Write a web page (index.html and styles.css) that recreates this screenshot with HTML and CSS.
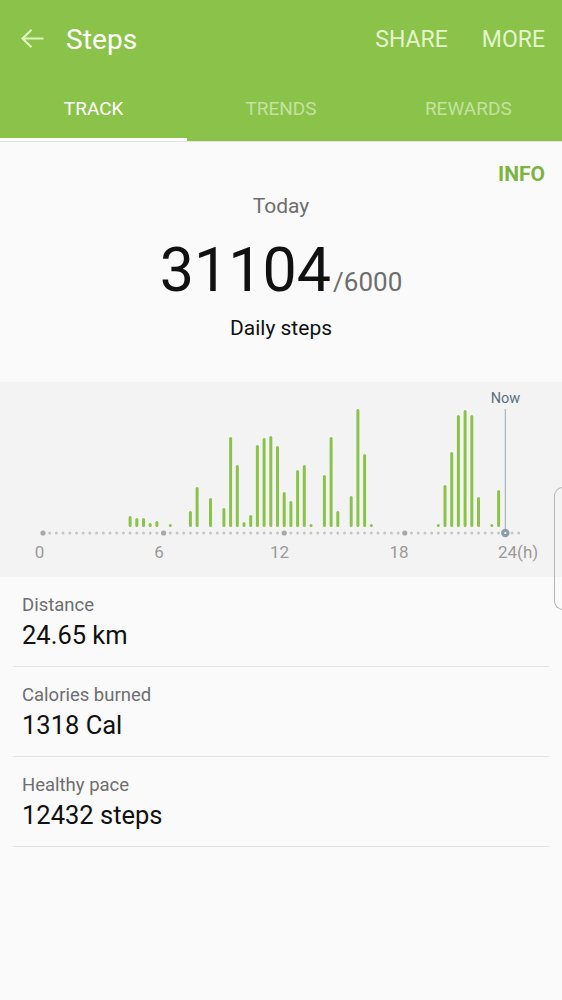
FILE: index.html
```html
<!DOCTYPE html>
<html lang="en">
<head>
<meta charset="utf-8">
<title>Steps</title>
<link rel="stylesheet" href="styles.css">
</head>
<body>
<div class="screen">
  <header class="header">
    <div class="appbar">
      <svg class="back" width="24" height="20" viewBox="0 0 24 20" aria-hidden="true">
        <path d="M1.5 9.5 H22.5 M10.5 0.8 L1.5 9.5 L10.5 18.2" fill="none" stroke="#dcf4bd" stroke-width="2.2" stroke-linecap="butt" stroke-linejoin="miter"/>
      </svg>
      <h1 class="title">Steps</h1>
      <div class="actions">
        <span class="action">SHARE</span>
        <span class="action">MORE</span>
      </div>
    </div>
    <nav class="tabs">
      <div class="tab active">TRACK</div>
      <div class="tab">TRENDS</div>
      <div class="tab">REWARDS</div>
    </nav>
  </header>

  <section class="summary">
    <div class="info-row"><span class="info">INFO</span></div>
    <div class="today">Today</div>
    <div class="count"><span class="count-value">31104</span><span class="count-goal">/6000</span></div>
    <div class="count-label">Daily steps</div>
  </section>

  <section class="chart">
    <svg class="chart-svg" width="562" height="195" viewBox="0 0 562 195">
      <g fill="#8bc34a">
        <rect x="128.6" y="134" width="3" height="11" rx="1.5"/>
        <rect x="135.3" y="136" width="3" height="9" rx="1.5"/>
        <rect x="142.0" y="136" width="3" height="9" rx="1.5"/>
        <rect x="148.7" y="141" width="3" height="4" rx="1.5"/>
        <rect x="155.4" y="139" width="3" height="6" rx="1.5"/>
        <rect x="168.8" y="142" width="3" height="3" rx="1.5"/>
        <rect x="188.9" y="129" width="3" height="16" rx="1.5"/>
        <rect x="195.6" y="105" width="3" height="40" rx="1.5"/>
        <rect x="209.0" y="116" width="3" height="29" rx="1.5"/>
        <rect x="222.4" y="126" width="3" height="19" rx="1.5"/>
        <rect x="229.1" y="55" width="3" height="90" rx="1.5"/>
        <rect x="235.8" y="83" width="3" height="62" rx="1.5"/>
        <rect x="242.5" y="140" width="3" height="5" rx="1.5"/>
        <rect x="249.2" y="133" width="3" height="12" rx="1.5"/>
        <rect x="255.9" y="63" width="3" height="82" rx="1.5"/>
        <rect x="262.6" y="56" width="3" height="89" rx="1.5"/>
        <rect x="269.3" y="54" width="3" height="91" rx="1.5"/>
        <rect x="276.0" y="64" width="3" height="81" rx="1.5"/>
        <rect x="282.7" y="110" width="3" height="35" rx="1.5"/>
        <rect x="289.4" y="119" width="3" height="26" rx="1.5"/>
        <rect x="296.1" y="88" width="3" height="57" rx="1.5"/>
        <rect x="302.8" y="83" width="3" height="62" rx="1.5"/>
        <rect x="309.5" y="142" width="3" height="3" rx="1.5"/>
        <rect x="322.9" y="93" width="3" height="52" rx="1.5"/>
        <rect x="329.6" y="55" width="3" height="90" rx="1.5"/>
        <rect x="336.3" y="129" width="3" height="16" rx="1.5"/>
        <rect x="349.7" y="114" width="3" height="31" rx="1.5"/>
        <rect x="356.4" y="27" width="3" height="118" rx="1.5"/>
        <rect x="363.1" y="72" width="3" height="73" rx="1.5"/>
        <rect x="369.8" y="142" width="3" height="3" rx="1.5"/>
        <rect x="436.8" y="142" width="3" height="3" rx="1.5"/>
        <rect x="443.5" y="103" width="3" height="42" rx="1.5"/>
        <rect x="450.2" y="70" width="3" height="75" rx="1.5"/>
        <rect x="456.9" y="33" width="3" height="112" rx="1.5"/>
        <rect x="463.6" y="28" width="3" height="117" rx="1.5"/>
        <rect x="470.3" y="33" width="3" height="112" rx="1.5"/>
        <rect x="477.0" y="115" width="3" height="30" rx="1.5"/>
        <rect x="490.4" y="142" width="3" height="3" rx="1.5"/>
        <rect x="497.1" y="108" width="3" height="37" rx="1.5"/>
      </g>
      <line x1="43" y1="151" x2="519" y2="151" stroke="#c6c6c6" stroke-width="3" stroke-linecap="round" stroke-dasharray="0 6.7"/>
      <g fill="#a8a8a8">
        <circle cx="43" cy="151" r="2.6"/>
        <circle cx="163.6" cy="151" r="2.6"/>
        <circle cx="284.2" cy="151" r="2.6"/>
        <circle cx="404.8" cy="151" r="2.6"/>
      </g>
      <line x1="505.3" y1="27" x2="505.3" y2="151" stroke="#97a8b4" stroke-width="1"/>
      <circle cx="505.3" cy="151" r="4.2" fill="#8c9daa"/>
      <circle cx="505.3" cy="151" r="1.1" fill="#ffffff"/>
      <text class="now" x="505.5" y="21" text-anchor="middle">Now</text>
      <g class="axis">
        <text x="39.5" y="176" text-anchor="middle">0</text>
        <text x="159" y="176" text-anchor="middle">6</text>
        <text x="279.5" y="176" text-anchor="middle">12</text>
        <text x="399" y="176" text-anchor="middle">18</text>
        <text x="498" y="176">24(h)</text>
      </g>
    </svg>
  </section>

  <section class="stats">
    <div class="stat">
      <div class="stat-label">Distance</div>
      <div class="stat-value">24.65 km</div>
    </div>
    <div class="stat">
      <div class="stat-label">Calories burned</div>
      <div class="stat-value">1318 Cal</div>
    </div>
    <div class="stat">
      <div class="stat-label">Healthy pace</div>
      <div class="stat-value">12432 steps</div>
    </div>
  </section>

  <div class="edge-handle" aria-hidden="true"></div>
</div>
</body>
</html>
```
FILE: styles.css
```css
* { box-sizing: border-box; }

html, body {
  margin: 0;
  padding: 0;
}

body {
  background: #fafafa;
  font-family: Roboto, "Noto Sans", "Liberation Sans", sans-serif;
  color: #111;
}

.screen {
  position: relative;
  width: 562px;
  min-height: 1000px;
  background: #fafafa;
  overflow: hidden;
}

/* Header */
.header {
  background: #8bc34a;
  border-bottom: 1px solid #e2e2e2;
}

.appbar {
  height: 78px;
  display: flex;
  align-items: center;
  padding: 0 17px 0 21px;
}

.back {
  display: block;
  margin-top: -1px;
}

.title {
  margin: 0 0 0 21px;
  font-size: 28px;
  font-weight: 400;
  color: #ffffff;
  flex: 1;
  letter-spacing: 0.1px;
}

.actions {
  display: flex;
  gap: 34px;
}

.action {
  font-size: 23px;
  color: #e3f5cc;
}

.tabs {
  display: flex;
  height: 63px;
}

.tab {
  flex: 1;
  display: flex;
  align-items: center;
  justify-content: center;
  font-size: 19px;
  color: #c3e29f;
  border-bottom: 3px solid transparent;
  padding-top: 1px;
}

.tab.active {
  color: #ffffff;
  border-bottom-color: #ffffff;
}

/* Summary */
.summary {
  padding: 20px 0 0;
  height: 240px;
  text-align: center;
}

.info-row {
  display: flex;
  justify-content: flex-end;
  padding-right: 17px;
  line-height: 24px;
}

.info {
  font-size: 21px;
  font-weight: 700;
  color: #7cb342;
}

.today {
  margin-top: 8px;
  font-size: 21px;
  line-height: 24px;
  color: #6e6e6e;
}

.count {
  margin-top: 20px;
  font-size: 61px;
  line-height: 64px;
  height: 64px;
}

.count-value {
  color: #111;
}

.count-goal {
  font-size: 26px;
  line-height: 1;
  color: #6e6e6e;
  margin-left: 2px;
}

.count-label {
  margin-top: 14px;
  font-size: 21px;
  line-height: 24px;
  color: #111;
}

/* Chart */
.chart {
  background: #f3f3f3;
  height: 195px;
}

.chart-svg {
  display: block;
}

.now {
  font-family: Roboto, "Noto Sans", sans-serif;
  font-size: 14.5px;
  fill: #5b6f7d;
}

.axis text {
  font-family: Roboto, "Noto Sans", sans-serif;
  font-size: 17px;
  fill: #9a9a9a;
}

/* Stats list */
.stats {
  padding: 0 13px;
}

.stat {
  padding: 16px 9px 12px;
  border-bottom: 1px solid #e3e3e3;
}

.stat-label {
  font-size: 18.5px;
  line-height: 24px;
  color: #6e6e6e;
}

.stat-value {
  font-size: 25.5px;
  line-height: 37px;
  color: #111;
}

/* Edge panel handle overlay */
.edge-handle {
  position: absolute;
  left: 554px;
  top: 487px;
  width: 14px;
  height: 123px;
  border: 1.5px solid #b5b5b5;
  border-right: none;
  border-radius: 9px 0 0 9px;
}
```
